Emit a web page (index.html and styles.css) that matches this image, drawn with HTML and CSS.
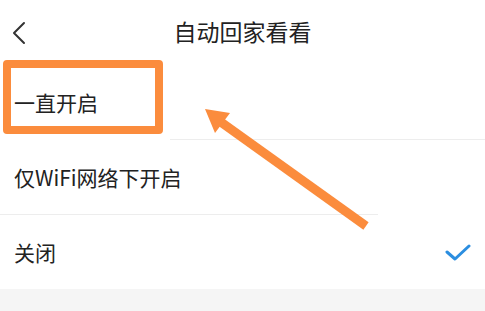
FILE: index.html
```html
<!DOCTYPE html>
<html lang="zh">
<head>
<meta charset="utf-8">
<link rel="stylesheet" href="styles.css">
</head>
<body>
<div class="page">
  <header class="bar">
    <svg class="back" width="16" height="24" viewBox="0 0 16 24"><path d="M13 2 L3 12 L13 22" fill="none" stroke="#333" stroke-width="2" stroke-linecap="round" stroke-linejoin="round"/></svg>
    <h1 class="title">自动回家看看</h1>
  </header>
  <ul class="list">
    <li class="row">一直开启</li>
    <li class="sep sep-a"></li>
    <li class="row">仅WiFi网络下开启</li>
    <li class="sep sep-b"></li>
    <li class="row">关闭<svg class="check" width="26" height="18" viewBox="0 0 26 18"><path d="M2 8 L10 15 L24 2" fill="none" stroke="#2b8ee0" stroke-width="3" stroke-linecap="round" stroke-linejoin="round"/></svg></li>
  </ul>
  <div class="rest"></div>
  <div class="mark-box"></div>
  <svg class="mark-arrow" width="485" height="311" viewBox="0 0 485 311">
    <line x1="366" y1="226" x2="218" y2="120" stroke="#fb8c3d" stroke-width="9"/>
    <polygon points="205,109 230,113 215,133" fill="#fb8c3d"/>
  </svg>
</div>
</body>
</html>
```
FILE: styles.css
```css
html, body {
  margin: 0;
  padding: 0;
  background: #ffffff;
}
.page {
  position: relative;
  width: 485px;
  height: 311px;
  overflow: hidden;
  display: flex;
  flex-direction: column;
  font-family: "Noto Sans CJK SC", "Noto Sans", sans-serif;
  color: #222;
}
.bar {
  height: 65px;
  display: flex;
  align-items: center;
  justify-content: center;
  position: relative;
}
.back {
  position: absolute;
  left: 11px;
  top: 21px;
}
.title {
  margin: 0;
  font-size: 23px;
  font-weight: 400;
  line-height: 1;
  color: #222;
  margin-top: -2px;
}
.list {
  list-style: none;
  margin: 0;
  padding: 0;
  display: flex;
  flex-direction: column;
}
.row {
  height: 74px;
  display: flex;
  align-items: center;
  justify-content: space-between;
  padding: 0 14px;
  font-size: 21px;
  line-height: 1;
}
.sep {
  height: 1px;
  background: #ededed;
}
.sep-a {
  margin-left: 170px;
}
.sep-b {
  margin-right: 107px;
}
.check {
  margin-right: 0;
  margin-top: 2px;
}
.rest {
  flex: 1;
  background: #f5f5f5;
}
.mark-box {
  position: absolute;
  left: 3px;
  top: 60px;
  width: 144px;
  height: 58px;
  border: 8px solid #fb8c3d;
  border-radius: 4px;
}
.mark-arrow {
  position: absolute;
  left: 0;
  top: 0;
}
```
